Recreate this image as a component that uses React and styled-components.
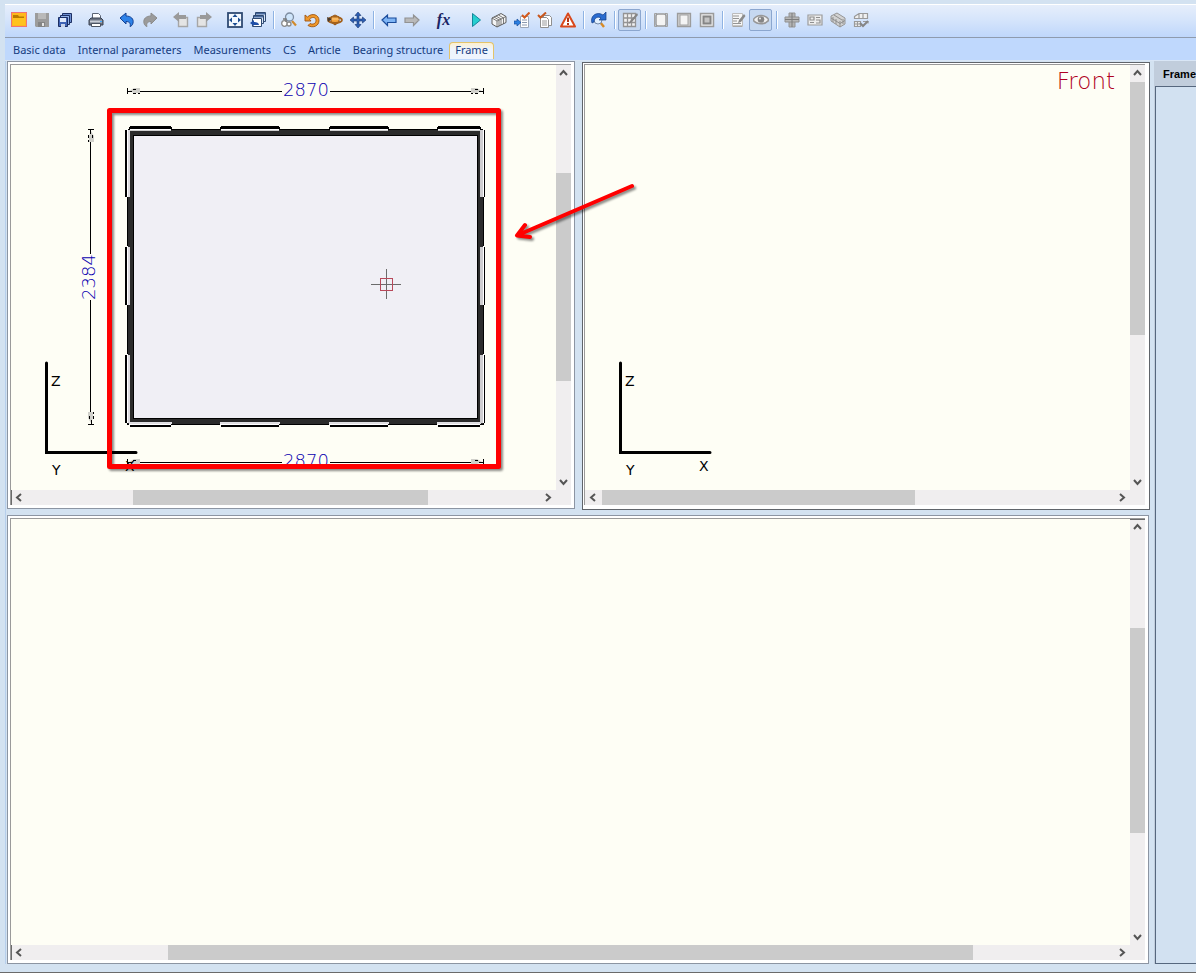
import { useState } from 'react';
import styled, { createGlobalStyle } from 'styled-components';

const TABS = ['Basic data', 'Internal parameters', 'Measurements', 'CS', 'Article', 'Bearing structure', 'Frame'];

const TOP_CLIPS = [[130, 42], [221, 59], [330, 59], [438, 43]];
const SIDE_CLIPS = [[130, 68], [247, 59], [355, 69]];

const icons = {
    open: <>
        <rect x="0.5" y="0.5" width="15" height="14" fill="#ffb81c" stroke="#f07474" />
        <path d="M2 3h5l1 1.500h5v2H2z" fill="#b97a00" />
        <path d="M2 6h12v7H2z" fill="#ffc21f" />
    </>,
    save: <>
        <path d="M1 1h14v14H2l-1-1z" fill="#9c9c9c" />
        <path d="M4 1h8v6H4z" fill="#b9b9b9" />
        <path d="M4 10h7v5H4z" fill="#858585" />
        <path d="M8 11h2v3H8z" fill="#e6e6e6" />
    </>,
    saveAll: <>
        <path d="M5.500 1.500h9v9h-9z" fill="#6d8fd0" stroke="#1d2f63" />
        <path d="M3.500 3.500h9v9h-9z" fill="#8fb0e8" stroke="#1d2f63" />
        <path d="M1.500 5.500h9v9h-9z" fill="#3f63b5" stroke="#1d2f63" />
        <path d="M3 6h6v4H3z" fill="#dfe9fb" />
        <path d="M4 12h4v3H4z" fill="#c9d4ea" />
    </>,
    print: <>
        <path d="M4.500 7V1.500h6l2 2V7" fill="#fff" stroke="#5b6474" />
        <path d="M1 8l2-2h10l2 2v5H1z" fill="#6c7482" stroke="#3b4352" />
        <path d="M2 8.500h12v2H2z" fill="#c9ced8" />
        <path d="M3.500 11.500h9v3h-9z" fill="#fff" stroke="#4b5362" />
        <path d="M12 9h2v1h-2z" fill="#3fa7ff" />
    </>,
    undo: <path d="M1 6l6-5v3c5 0 8 3 7 7-.3 2-1.500 3-3 3.500 1-3-.5-5-4-5V12z" fill="#2e82e8" stroke="#123f92" />,
    redo: <path d="M15 6L9 1v3C4 4 1 7 2 11c.3 2 1.500 3 3 3.500-1-3 .5-5 4-5V12z" fill="#9b9b9b" stroke="#8b8b8b" />,
    pageBack: <>
        <path d="M5.500 5.500h9v9h-9z" fill="#e4e4e4" stroke="#a6a6a6" strokeWidth="1.400" />
        <path d="M0 5l6-5v3h7v4H6v3z" fill="#9a9a9a" />
    </>,
    pageNext: <>
        <path d="M1.500 5.500h9v9h-9z" fill="#e4e4e4" stroke="#a6a6a6" strokeWidth="1.400" />
        <path d="M16 5l-6-5v3H4v4h6v3z" fill="#9a9a9a" />
    </>,
    fit: <>
        <rect x="1" y="1" width="14" height="14" fill="#f4f9ff" stroke="#2f4a72" strokeWidth="1.800" />
        <path d="M8 2l2.500 3h-5zM8 14l2.500-3h-5zM2 8l3-2.500v5zM14 8l-3-2.500v5z" fill="#1d4e93" />
    </>,
    windows: <>
        <path d="M5.500.5h10v9h-10z" fill="#d8e6f8" stroke="#2f4a72" />
        <path d="M3.500 3.500h10v8h-10z" fill="#d8e6f8" stroke="#2f4a72" />
        <path d="M2.500 6.500h9v8h-9z" fill="#fff" stroke="#2f4a72" />
        <path d="M6 1h9v1.500H6zM4 4h9v1.500H4z" fill="#46689d" />
        <path d="M0 11l4-3v2c3 0 5 1 5 3H4v1z" fill="#1f4fa8" />
    </>,
    zoomPrint: <>
        <path d="M11 9l4 4.500" stroke="#d18a2c" strokeWidth="2.200" />
        <circle cx="8.500" cy="5" r="4" fill="#cfe5fb" stroke="#7e8da1" strokeWidth="1.300" />
        <circle cx="3.500" cy="11.500" r="2.800" fill="#fff" stroke="#8b8b8b" strokeWidth="1.300" />
        <circle cx="8" cy="12" r="2" fill="#fff" stroke="#8b8b8b" strokeWidth="1.300" />
        <path d="M2 7h3v3" fill="none" stroke="#777" strokeWidth="1.300" />
    </>,
    rotate: <path d="M1 3v6h6L5.500 7.200C8 4.500 12 5 12 8.500c0 3-3 4.500-6 3L4 13.500c5 3 11 .5 11-5C15 2.500 8 .5 3.500 5z" fill="#f0982a" stroke="#9c5312" strokeWidth="0.900" />,
    orbit: <>
        <path d="M4 5l4-2 4 2v5l-4 3-4-3z" fill="#f5a43e" stroke="#8c4d12" />
        <ellipse cx="8" cy="8" rx="7" ry="3" fill="none" stroke="#a3611b" strokeWidth="1.800" />
        <path d="M5 5.500h6l1 2.500H4z" fill="#f9b85f" />
        <path d="M0 5l5 2-4 3z" fill="#4a3a2c" />
    </>,
    move: <path d="M8 0l3 3.500H9V7h3.500V5L16 8l-3.500 3V9H9v3.500h2L8 16l-3-3.500h2V9H3.500v2L0 8l3.500-3v2H7V3.500H5z" fill="#2c5fb4" stroke="#173570" strokeWidth="0.600" />,
    left: <path d="M1 8l5.500-5v3H15v4.500H6.500v3z" fill="#7fb5f5" stroke="#1b4c9b" strokeWidth="1.200" />,
    right: <path d="M15 8L9.500 3v3H1v4.500h8.500v3z" fill="#b9b9b9" stroke="#929292" strokeWidth="1.200" />,
    play: <path d="M4.500 1.500l8 6.500-8 6.500z" fill="#26cfd0" stroke="#14869b" />,
    layers: <>
        <path d="M1 6l9-4.500 5 3v6L6 15l-5-3z" fill="#f4f4f4" stroke="#5d5d5d" />
        <path d="M1 6l5 3 9-4.500M6 9v6M3 5l5 3v6M5 4l5 3v6M7.500 3l5 3v6" fill="none" stroke="#5c5c5c" strokeWidth="0.800" />
    </>,
    checkIn: <>
        <path d="M6.500 4.500h8v11h-8z" fill="#fff" stroke="#9ba6b8" />
        <path d="M8 8h5M8 10.500h5M8 13h5" stroke="#8b98ae" />
        <path d="M0 9h3V7l4 3.500L3 14v-2H0z" fill="#2b7fe0" stroke="#164c9b" strokeWidth="0.700" />
        <path d="M8 3l2.500 2.500L15.500.5" fill="none" stroke="#d2591c" strokeWidth="2" />
    </>,
    checkList: <>
        <path d="M6.500 3.500h6l2 2v8h-8z" fill="#fff" stroke="#8f8f8f" />
        <path d="M3.500 5.500h6l2 2v8h-8z" fill="#fff" stroke="#8f8f8f" />
        <path d="M5 9h5M5 11h5M5 13h5" stroke="#9a9a9a" />
        <path d="M1 3l2.500 2.500L9 .5" fill="none" stroke="#c9571d" strokeWidth="2" />
    </>,
    warning: <>
        <path d="M8 1.500L15 14.500H1z" fill="#fff" stroke="#d9481c" strokeWidth="2" strokeLinejoin="round" />
        <path d="M7 5.500h2v4.500H7zM7 11h2v2H7z" fill="#b5330f" />
    </>,
    refreshZoom: <>
        <path d="M9 10l4 5" stroke="#d88a24" strokeWidth="2.400" />
        <circle cx="7" cy="8" r="4" fill="#e3f1ff" stroke="#7188a8" />
        <path d="M1 11C-1 5 4 0 10 2l2 1 3-3v8H8l2-2C7 4 3 6 3 10z" fill="#2a6cd0" stroke="#123c85" strokeWidth="0.700" />
    </>,
    grid: <>
        <path d="M1.500 1.500h12v13h-12zM5.500 1v14M9.500 1v14M1 6h13M1 10.500h13" fill="#f1f1f1" stroke="#949494" strokeWidth="1.300" />
        <path d="M15 1l-7 8-1.500 3 3-1.500L16 3z" fill="#858585" />
    </>,
    boxOut: <>
        <path d="M1.500 4V1.500H4M12 1.500h2.500V4M1.500 12v2.500H4M12 14.500h2.500V12M1.500 4v8M14.500 4v8" fill="none" stroke="#a2a2a2" />
        <rect x="3" y="2" width="10" height="12" rx="2" fill="#f4f4f4" stroke="#9a9a9a" strokeWidth="1.500" />
    </>,
    boxIn: <>
        <path d="M1.500 1.500h13v13h-13z" fill="#cfcfcf" stroke="#9c9c9c" strokeWidth="1.300" />
        <rect x="4" y="3" width="8" height="10" fill="#f4f4f4" stroke="#a2a2a2" />
    </>,
    boxFull: <>
        <rect x="1.500" y="1.500" width="13" height="13" fill="#ececec" stroke="#9b9b9b" strokeWidth="1.500" />
        <rect x="4.500" y="4.500" width="7" height="7" fill="#c3c3c3" stroke="#858585" strokeWidth="2" />
    </>,
    edit: <>
        <path d="M2.500 1.500h10v13h-10z" fill="#f6f6f6" stroke="#bcbcbc" />
        <path d="M3 4h6M3 6.500h6M3 9h4M3 11.500h8M3 14h9" stroke="#949494" strokeWidth="1.200" />
        <path d="M14 2l-5 6-1 3 3-1 4.500-6z" fill="#8b8b8b" />
    </>,
    eye: <>
        <path d="M0 8c4-6 12-6 16 0-4 5-12 5-16 0z" fill="#f0f0f0" stroke="#989898" strokeWidth="1.600" />
        <circle cx="8" cy="7.500" r="3.300" fill="#858585" />
        <circle cx="7" cy="6.500" r="1" fill="#eee" />
    </>,
    cross: <>
        <path d="M5 1h6v14H5z" fill="#b4b4b4" stroke="#949494" />
        <path d="M1 5h14v5H1z" fill="#b7b7b7" stroke="#8f8f8f" />
        <path d="M8 1v14M1 7.500h14" stroke="#7d7d7d" />
    </>,
    plan: <>
        <path d="M1 3h14v10H1z" fill="#ededed" stroke="#9b9b9b" strokeWidth="1.200" />
        <path d="M3 5h4v3H3zM9 5.500h4M9 8h4v3H9M3 10.500h4" fill="none" stroke="#8f8f8f" strokeWidth="1.200" />
    </>,
    solid: <>
        <path d="M1 4l6-3 8 5v6l-5 3-9-6z" fill="#d2d2d2" stroke="#969696" />
        <path d="M1 6l9 5.500 5-3M10 9v6M4 3l8 5M3 5v5M6 7v5M13 7v5" fill="none" stroke="#8f8f8f" />
    </>,
    parts: <>
        <path d="M1.500 4.500L6 1.500h8.500v5h-13zM6 2v5M10 2v5M1.500 9.500h6v5h-6zM4.500 9v6M1 12h7M10 9.500h5v2" fill="#f0f0f0" stroke="#9a9a9a" strokeWidth="1.200" />
        <path d="M7 11l3 3 5-5" fill="none" stroke="#858585" strokeWidth="2" />
    </>,
};

// '|' draws a separator line, ' ' leaves the same room empty
const TOOLS = [
    ['open', 'Open'], ['save', 'Save'], ['saveAll', 'Save all'], ' ',
    ['print', 'Print'], ' ',
    ['undo', 'Undo'], ['redo', 'Redo'], ' ',
    ['pageBack', 'Previous page'], ['pageNext', 'Next page'], ' ',
    ['fit', 'Fit to window'], ['windows', 'Windows'], '|',
    ['zoomPrint', 'Zoom'], ['rotate', 'Rotate'], ['orbit', 'Orbit'], ['move', 'Move'], '|',
    ['left', 'Back'], ['right', 'Forward'], ' ',
    ['fx', 'Formula'], ' ',
    ['play', 'Run'], ['layers', 'Layers'], ['checkIn', 'Check in'], ['checkList', 'Check list'], ['warning', 'Warnings'], '|',
    ['refreshZoom', 'Refresh view'], '|',
    ['grid', 'Grid', true], '|',
    ['boxOut', 'Outer box'], ['boxIn', 'Inner box'], ['boxFull', 'Full box'], '|',
    ['edit', 'Edit'], ['eye', 'Show', true], '|',
    ['cross', 'Section'], ['plan', 'Plan'], ['solid', 'Solid'], ['parts', 'Parts'],
];

function Tool({ name, label, pressed }) {
    if (name === 'fx') {
        return <FormulaButton type="button" title={label}>fx</FormulaButton>
    }
    return(
        <ToolButton type="button" aria-label={label} title={label} $pressed={pressed}>
            <svg width="16" height="16" viewBox="0 0 16 16">{icons[name]}</svg>
        </ToolButton>
    )
}

const ARROWS = {
    up: 'M1 6l3.500-4L8 6',
    down: 'M1 3l3.500 4L8 3',
    left: 'M6 1L2 4.500L6 8',
    right: 'M3 1l4 3.500L3 8',
};

function Arrow({ to }) {
    return(
        <ArrowButton type="button" aria-label={`Scroll ${to}`}>
            <svg width="9" height="9" viewBox="0 0 9 9">
                <path d={ARROWS[to]} fill="none" stroke="#555" strokeWidth="2" />
            </svg>
        </ArrowButton>
    )
}

function Scrollbar({ vertical, parts, edge }) {
    const [before, thumb, after] = parts;
    return(
        <Bar $vertical={vertical} $edge={edge}>
            <Arrow to={vertical ? 'up' : 'left'} />
            <Track $size={before} />
            <Track $size={thumb} $thumb />
            <Track $size={after} />
            <Arrow to={vertical ? 'down' : 'right'} />
        </Bar>
    )
}

function Axes({ x }) {
    return(
        <g transform={`translate(${x} 0)`}>
            <path d="M46.500 363v89.500H136" fill="none" stroke="#000" strokeWidth="3" strokeLinecap="round" />
            <AxisText x="51" y="386">Z</AxisText>
            <AxisText x="52" y="475">Y</AxisText>
            <AxisText x="125" y="471">X</AxisText>
        </g>
    )
}

function ArrowHead({ transform }) {
    return(
        <g transform={transform}>
            <path d="M0.500 -3v6" stroke="#000" />
            <path d="M2 0l5-3h6v5H7z" fill="#d0d0ca" />
            <path d="M1 0.500h4M6 -1.500h3M6 2.500h3M11 2.500h2" stroke="#000" />
        </g>
    )
}

function WidthDimension({ y }) {
    return(
        <g>
            <path d={`M140 ${y}.5h142M330 ${y}.5h142`} stroke="#000" />
            <ArrowHead transform={`translate(127 ${y})`} />
            <ArrowHead transform={`translate(484 ${y}) scale(-1 1)`} />
            <SizeText x="306" y={y + 5}>2870</SizeText>
        </g>
    )
}

function FrontElevation() {
    return(
        <svg width="545" height="425" viewBox="11 65 545 425">
            <WidthDimension y={91} />
            <WidthDimension y={462} />
            <path d="M90.500 141v113M90.500 300v113" stroke="#000" />
            <ArrowHead transform="translate(91 129) rotate(90)" />
            <ArrowHead transform="translate(91 425) rotate(-90)" />
            <SizeText transform="translate(95 277) rotate(-90)">2384</SizeText>

            <rect x="127.500" y="129.500" width="356" height="295" fill="#2b2b2b" stroke="#000" />
            <rect x="133.500" y="135.500" width="344" height="283" fill="#f0eff5" stroke="#000" />
            {TOP_CLIPS.map(([x, w]) => (
                <g key={x}>
                    <rect x={x} y="126" width={w - 1} height="3" fill="#000" />
                    <rect x={x - 1} y="127" width={w + 1} height="2" fill="#000" />
                    <rect x={x} y="129" width={w - 1} height="1" fill="#fff" />
                    <rect x={x} y="130" width={w - 1} height="1" fill="#cfcfcf" />
                    <rect x={x - 1} y="422" width={w + 1} height="2" fill="#e0dfe2" />
                    <rect x={x - 1} y="424" width={w} height="1" fill="#fff" />
                    <rect x={x} y="425" width={w - 1} height="2" fill="#000" />
                </g>
            ))}
            {SIDE_CLIPS.map(([y, h]) => (
                <g key={y}>
                    <rect x="125" y={y} width="2" height={h - 1} fill="#000" />
                    <rect x="127" y={y - 1} width="1" height={h} fill="#fff" />
                    <rect x="128" y={y} width="2" height={h - 1} fill="#dcdadd" />
                    <rect x="480" y={y} width="3" height={h - 1} fill="#cfced0" />
                    <rect x="483" y={y - 1} width="1" height={h} fill="#fff" />
                    <rect x="484" y={y} width="1" height={h - 1} fill="#000" />
                </g>
            ))}

            <path d="M371 284.500h30M386.500 269v30" stroke="#6b6b6b" />
            <rect x="380.500" y="278.500" width="12" height="12" fill="none" stroke="#b8485a" />
            <Axes x={0} />
        </svg>
    )
}

export default function App() {
    const [tab, setTab] = useState('Frame');

    return(
        <Page>
            <GlobalStyle />
            <Toolbar>
                { TOOLS.map((tool, i) => typeof tool === 'string'
                    ? <Separator key={i} $line={tool === '|'} />
                    : <Tool key={i} name={tool[0]} label={tool[1]} pressed={tool[2]} /> ) }
            </Toolbar>
            <Tabs role="tablist">
                { TABS.map((name) =>
                    <Tab key={name} type="button" role="tab" aria-selected={tab === name} $active={tab === name} onClick={() => setTab(name)}>
                        {name}
                    </Tab> ) }
            </Tabs>
            <Main>
                <Views>
                    <ElevationPanel>
                        <Inner>
                            <Canvas><FrontElevation /></Canvas>
                            <Scrollbar vertical parts={[91, 208, 92]} />
                            <Scrollbar parts={[105, 295, 111]} edge />
                            <Corner />
                        </Inner>
                    </ElevationPanel>
                    <FrontPanel>
                        <Inner>
                            <Canvas>
                                <svg width="200" height="425" viewBox="585 65 200 425"><Axes x={574} /></svg>
                                <ViewName>Front</ViewName>
                            </Canvas>
                            <Scrollbar vertical parts={[0, 253, 138]} />
                            <Scrollbar parts={[0, 313, 198]} />
                            <Corner />
                        </Inner>
                    </FrontPanel>
                    <WidePanel>
                        <Inner>
                            <Canvas />
                            <Scrollbar vertical parts={[92, 204, 95]} edge />
                            <Scrollbar parts={[140, 805, 140]} edge />
                            <Corner />
                        </Inner>
                    </WidePanel>
                    <Callout width="640" height="450" viewBox="7 61 640 450">
                        <rect x="109.500" y="110.500" width="389" height="356" />
                        <path d="M632 186L518 235M525 225L517 235.500L530 237" />
                    </Callout>
                </Views>
                <Side>
                    <SideTitle>Frame</SideTitle>
                    <SideBody />
                </Side>
            </Main>
        </Page>
    )
}

const GlobalStyle = createGlobalStyle`
    body {
        margin: 0;
        background-color: #d3e2f1;
    }

    * {
        box-sizing: border-box;
    }
`

const Page = styled.div`
    display: flex;
    flex-direction: column;
    min-height: 100vh;
    padding: 4px 0 8px 5px;
    overflow: hidden;
    background-color: #d3e2f1;
    border-bottom: 1px solid #6a6a6a;
    font-family: 'Noto Sans', 'Open Sans', sans-serif;
    font-size: 11px;
`

const Toolbar = styled.div`
    display: flex;
    align-items: center;
    flex-shrink: 0;
    height: 34px;
    padding: 0 0 2px 2px;
    border-top: 1px solid #ffffff;
    border-bottom: 1px solid #8f9bad;
    background: linear-gradient(#e6eefb, #d6e5fb 45%, #bfd7fb);
`

const ToolButton = styled.button`
    display: flex;
    flex-shrink: 0;
    justify-content: center;
    align-items: center;
    width: 23px;
    height: 22px;
    padding: 0;
    border: 1px solid ${(props) => props.$pressed ? '#8ba6cf' : 'transparent'};
    border-radius: 2px;
    background-color: ${(props) => props.$pressed ? '#c6d8f0' : 'transparent'};
`

const FormulaButton = styled(ToolButton)`
    width: 25px;
    color: #1a2465;
    font: italic bold 16px 'Liberation Serif', serif;
`

const Separator = styled.div`
    flex-shrink: 0;
    width: 2px;
    height: 18px;
    margin: 0 2px 0 4px;
    background: ${(props) => props.$line ? 'linear-gradient(90deg, #8fb3e3 50%, #ffffff 50%)' : 'none'};
`

const Tabs = styled.div`
    display: flex;
    align-items: flex-end;
    flex-shrink: 0;
    height: 23px;
    padding: 0 0 1px 2px;
    background-color: #bfd8fd;
    border-bottom: 1px solid #d9e6f6;
`

const Tab = styled.button`
    height: 17px;
    padding: 0 5px 2px;
    border: 1px solid ${(props) => props.$active ? '#e3c46b' : 'transparent'};
    border-bottom: none;
    border-radius: 4px 4px 0 0;
    background: ${(props) => props.$active ? 'linear-gradient(#fdf0cf, #eef4fd 40%)' : 'none'};
    color: #153c80;
    font: inherit;
    line-height: 14px;
    white-space: nowrap;
`

const Main = styled.div`
    display: flex;
    flex: 1;
    border-left: 1px solid #b7cfec;
`

const Views = styled.div`
    position: relative;
    display: grid;
    grid-template-columns: minmax(0, 1fr) minmax(0, 1fr);
    grid-template-rows: minmax(0, 1fr) minmax(0, 1fr);
    gap: 5px 7px;
    flex: 1;
    margin-left: 1px;
`

const Panel = styled.section`
    padding: 2px 3px 3px 2px;
    border: 1px solid #8c95a3;
    background-color: #ffffff;
`

const ElevationPanel = styled(Panel)`
    margin-bottom: 1px;
`

const FrontPanel = styled(Panel)`
    margin-top: 1px;
    padding: 1px 4px 4px 1px;
    border-color: #60646a;
`

const WidePanel = styled(Panel)`
    grid-column: span 2;
    margin-right: 1px;
`

const Inner = styled.div`
    display: grid;
    grid-template-columns: minmax(0, 1fr) 15px;
    grid-template-rows: minmax(0, 1fr) 15px;
    height: 100%;
    border-top: 1px solid #9a9a9a;
    border-left: 1px solid #9a9a9a;
`

const Canvas = styled.div`
    display: flex;
    justify-content: space-between;
    align-items: flex-start;
    overflow: hidden;
    background-color: #fefef5;

    svg {
        flex-shrink: 0;
    }
`

const ViewName = styled.span`
    padding: 3px 15px 0 0;
    color: #b00020;
    font: 200 23px 'DejaVu Sans', sans-serif;
`

const SizeText = styled.text`
    fill: #0a00b0;
    font: 200 18px 'DejaVu Sans', sans-serif;
    text-anchor: middle;
`

const AxisText = styled.text`
    fill: #000000;
    font: 14px 'DejaVu Sans', sans-serif;
`

const Bar = styled.div`
    display: flex;
    flex-direction: ${(props) => props.$vertical ? 'column' : 'row'};
    background-color: #f0eeef;
    box-shadow: ${(props) => !props.$edge ? 'none' : props.$vertical ? 'inset 0 1px #6b6b6b' : 'inset 1px 0 #6b6b6b'};
`

const Track = styled.div`
    flex: ${(props) => props.$size} 0 0;
    background-color: ${(props) => props.$thumb ? '#cbcbcb' : 'transparent'};
`

const ArrowButton = styled.button`
    display: flex;
    flex: 0 0 17px;
    justify-content: center;
    align-items: center;
    padding: 0;
    border: none;
    background: none;
`

const Corner = styled.div`
    background-color: #f0eeef;
`

const Callout = styled.svg`
    position: absolute;
    top: 0;
    left: 0;
    fill: none;
    stroke: #ff0000;
    stroke-width: 5px;
    stroke-linecap: round;
    stroke-linejoin: round;
    filter: drop-shadow(2px 2px 1px rgba(0, 0, 0, 0.45));
    pointer-events: none;

    path {
        stroke-width: 4px;
    }
`

const Side = styled.aside`
    display: flex;
    flex-direction: column;
    flex: 0 0 42px;
    margin-left: 4px;
    overflow: hidden;
    background-color: #c1cddc;
`

const SideTitle = styled.div`
    height: 25px;
    padding-left: 9px;
    color: #000000;
    font: bold 11px 'Liberation Sans', sans-serif;
    line-height: 26px;
`

const SideBody = styled.div`
    flex: 1;
    margin-left: 1px;
    border: 1px solid #56677e;
    border-right: none;
    background-color: #d2e1f1;
`
